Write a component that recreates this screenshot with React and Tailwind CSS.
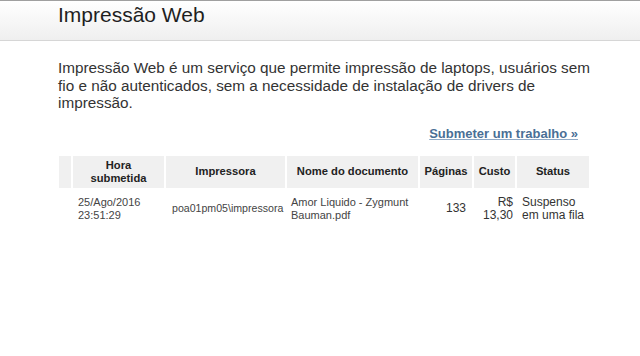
const jobs = [
  {
    time: ["25/Ago/2016", "23:51:29"],
    printer: "poa01pm05\\impressora",
    doc: ["Amor Liquido - Zygmunt", "Bauman.pdf"],
    pages: 133,
    cost: ["R$", "13,30"],
    status: ["Suspenso", "em uma fila"],
  },
];

const App = () => {
  return (
    <div className="min-h-screen bg-white font-['Liberation_Sans',Arial,sans-serif] text-[#333]">
      {/* Header */}
      <div className="h-[41px] border-t border-b border-t-[#a0a0a0] border-b-[#d6d6d6] bg-gradient-to-b from-white to-[#efefef] pl-[58px] pt-[2px]">
        <h1 className="text-[21px] leading-[24px] text-[#1f1f1f]">Impressão Web</h1>
      </div>

      <div className="pl-[58px]">
        {/* Intro */}
        <p className="mt-[18px] w-[540px] text-[15.3px] leading-[17.5px] text-[#333]">
          Impressão Web é um serviço que permite impressão de laptops, usuários sem fio e não
          autenticados, sem a necessidade de instalação de drivers de impressão.
        </p>

        {/* Link */}
        <div className="mt-[9px] w-[520px] text-right">
          <a href="#" className="text-[13px] font-bold leading-[16px] text-[#4a6f96] underline decoration-[#8fa9c6]">
            Submeter um trabalho »
          </a>
        </div>

        {/* Jobs table */}
        <table className="-ml-[1px] mt-[9px] w-[534px] table-fixed border-separate border-spacing-[2px]">
          <thead>
            <tr className="h-[32px] bg-[#f0f0f0] text-[11.2px] font-bold leading-[13px] text-[#222]">
              <th className="w-[12px]"></th>
              <th className="w-[91px] text-center">
                Hora
                <br />
                submetida
              </th>
              <th className="w-[119px] text-center">Impressora</th>
              <th className="w-[131px] text-center">Nome do documento</th>
              <th className="w-[52px] text-center">Páginas</th>
              <th className="w-[41px] text-center">Custo</th>
              <th className="w-[72px] text-center">Status</th>
            </tr>
          </thead>
          <tbody>
            {jobs.map((job, i) => (
              <tr key={i} className="align-middle">
                <td></td>
                <td className="pt-[6px] pl-[5px] text-[11px] leading-[13px] text-[#444]">
                  {job.time[0]}
                  <br />
                  {job.time[1]}
                </td>
                <td className="pt-[6px] pl-[6px] text-[10.6px] leading-[13px] text-[#444]">{job.printer}</td>
                <td className="pt-[6px] pl-[4px] text-[11px] leading-[13px] text-[#444]">
                  {job.doc[0]}
                  <br />
                  {job.doc[1]}
                </td>
                <td className="pt-[6px] pr-[6px] text-right text-[12px] leading-[13px]">{job.pages}</td>
                <td className="pt-[6px] pr-[2px] text-right text-[12px] leading-[13px]">
                  {job.cost[0]}
                  <br />
                  {job.cost[1]}
                </td>
                <td className="pt-[6px] pl-[5px] text-[12px] leading-[13px]">
                  {job.status[0]}
                  <br />
                  {job.status[1]}
                </td>
              </tr>
            ))}
          </tbody>
        </table>
      </div>
    </div>
  );
};

export default App;
